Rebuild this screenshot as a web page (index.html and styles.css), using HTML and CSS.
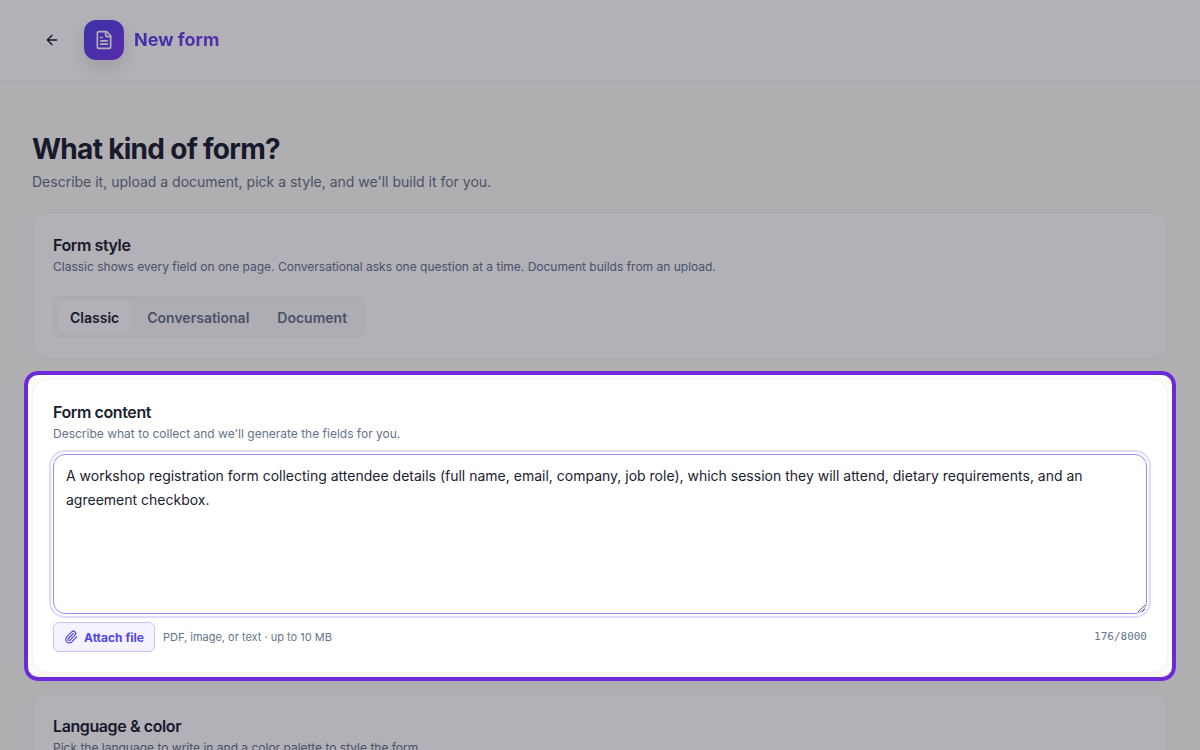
FILE: index.html
```html
<!DOCTYPE html>
<html lang="en">
<head>
  <meta charset="UTF-8">
  <meta name="viewport" content="width=device-width, initial-scale=1">
  <title>New form</title>
  <link rel="stylesheet" href="styles.css">
</head>
<body>
  <header class="topbar">
    <button class="back" type="button" aria-label="Back">
      <svg width="16" height="16" viewBox="0 0 24 24" fill="none" stroke="currentColor" stroke-width="2" stroke-linecap="round" stroke-linejoin="round"><path d="M19 12H5M12 19l-7-7 7-7"/></svg>
    </button>
    <div class="brand">
      <span class="brand-icon">
        <svg width="20" height="20" viewBox="0 0 24 24" fill="none" stroke="currentColor" stroke-width="2" stroke-linecap="round" stroke-linejoin="round"><path d="M15 2H6a2 2 0 0 0-2 2v16a2 2 0 0 0 2 2h12a2 2 0 0 0 2-2V7z"/><path d="M14 2v4a2 2 0 0 0 2 2h4M10 9H8M16 13H8M16 17H8"/></svg>
      </span>
      <span class="brand-title">New form</span>
    </div>
  </header>

  <main class="content">
    <h1>What kind of form?</h1>
    <p class="lead">Describe it, upload a document, pick a style, and we'll build it for you.</p>

    <div class="cards">
      <section class="card">
        <h2>Form style</h2>
        <p class="hint">Classic shows every field on one page. Conversational asks one question at a time. Document builds from an upload.</p>
        <div class="segmented">
          <button class="segment active" type="button">Classic</button>
          <button class="segment" type="button">Conversational</button>
          <button class="segment" type="button">Document</button>
        </div>
      </section>

      <section class="card spotlight">
        <h2><label for="prompt">Form content</label></h2>
        <p class="hint">Describe what to collect and we'll generate the fields for you.</p>
        <textarea id="prompt" class="prompt" maxlength="8000" spellcheck="false">A workshop registration form collecting attendee details (full name, email, company, job role), which session they will attend, dietary requirements, and an agreement checkbox.</textarea>
        <div class="prompt-footer">
          <button class="attach" type="button">
            <svg width="14" height="14" viewBox="0 0 24 24" fill="none" stroke="currentColor" stroke-width="2" stroke-linecap="round" stroke-linejoin="round"><path d="m16 6-8.414 8.586a2 2 0 0 0 2.829 2.829l8.414-8.586a4 4 0 1 0-5.657-5.657l-8.379 8.551a6 6 0 1 0 8.485 8.485l8.379-8.551"/></svg>
            Attach file
          </button>
          <span class="formats">PDF, image, or text · up to 10 MB</span>
          <span class="counter">176/8000</span>
        </div>
      </section>

      <section class="card">
        <h2>Language &amp; color</h2>
        <p class="hint">Pick the language to write in and a color palette to style the form.</p>
      </section>
    </div>
  </main>
</body>
</html>
```
FILE: styles.css
```css
* {
  box-sizing: border-box;
}
body {
  margin: 0;
  height: 100vh;
  overflow: hidden;
  background: #fbfbf6;
  color: #1a2130;
  font-family: Inter, "Liberation Sans", sans-serif;
}
h1, h2, p {
  margin: 0;
}
button {
  font-family: inherit;
  cursor: pointer;
}

/* Top bar */
.topbar {
  display: flex;
  align-items: center;
  gap: 12px;
  padding: 20px 32px;
  background: #fff;
  border-bottom: 1px solid #f5f4fb;
}
.back {
  display: flex;
  align-items: center;
  justify-content: center;
  width: 40px;
  height: 40px;
  padding: 0;
  border: 0;
  background: none;
  color: #1a2130;
}
.brand {
  display: flex;
  align-items: center;
  gap: 10px;
}
.brand-icon {
  display: flex;
  align-items: center;
  justify-content: center;
  width: 40px;
  height: 40px;
  border-radius: 12px;
  background: linear-gradient(135deg, #4f46e5, #7c3aed);
  color: #fff;
  box-shadow: 0 8px 16px rgba(26, 33, 48, 0.12);
}
.brand-title {
  font-size: 18px;
  font-weight: 700;
  line-height: 24px;
  background: linear-gradient(135deg, #4f46e5, #7c3aed);
  -webkit-background-clip: text;
  background-clip: text;
  color: transparent;
}

/* Page */
.content {
  padding: 48px 32px;
}
h1 {
  font-size: 28px;
  font-weight: 700;
  line-height: 40px;
  letter-spacing: -0.025em;
}
.lead {
  margin-top: 3px;
  font-size: 14px;
  line-height: 20px;
  color: #64748b;
}
.cards {
  display: flex;
  flex-direction: column;
  gap: 20px;
  margin-top: 20px;
}
.card {
  padding: 20px;
  background: #fff;
  border: 1px solid #f5f5f7;
  border-radius: 16px;
  box-shadow: 0 1px 2px rgba(26, 33, 48, 0.04);
}
h2 {
  font-size: 16px;
  font-weight: 600;
  line-height: 24px;
  letter-spacing: -0.025em;
}
.hint {
  margin-top: 2px;
  font-size: 12px;
  line-height: 16px;
  color: #64748b;
}

/* Style switch */
.segmented {
  display: inline-flex;
  gap: 4px;
  margin-top: 21px;
  padding: 4px;
  border: 1px solid #f1f1f3;
  border-radius: 8px;
  background: #fafaf9;
  vertical-align: top;
}
.segment {
  height: 32px;
  padding: 0 12px;
  border: 0;
  border-radius: 6px;
  background: none;
  color: #64748b;
  font-size: 14px;
  font-weight: 600;
}
.segment.active {
  background: #fff;
  color: #1a2130;
  box-shadow: 0 1px 2px rgba(26, 33, 48, 0.04);
}

/* Highlighted step, the rest of the page is dimmed */
.spotlight {
  position: relative;
}
.spotlight::after {
  content: "";
  position: absolute;
  inset: -9px;
  z-index: 10;
  border: 4px solid #6d28d9;
  border-radius: 14px;
  box-shadow: 0 0 0 2000px rgba(15, 12, 31, 0.32);
  pointer-events: none;
}
.prompt {
  display: block;
  width: 100%;
  height: 160px;
  margin-top: 12px;
  padding: 9px 12px;
  border: 1px solid #9b8cf0;
  border-radius: 12px;
  outline: 0;
  box-shadow: 0 0 0 2px #fff, 0 0 0 4px #dedbfb;
  color: #1a2130;
  font-family: inherit;
  font-size: 14px;
  line-height: 24px;
  resize: vertical;
}
.prompt-footer {
  display: flex;
  align-items: center;
  gap: 8px;
  margin-top: 8px;
}
.attach {
  display: flex;
  align-items: center;
  gap: 6px;
  height: 30px;
  padding: 0 10px;
  border: 1px solid #c9c2f8;
  border-radius: 6px;
  background: #f5f3ff;
  color: #4f46e5;
  font-size: 12px;
  font-weight: 700;
}
.formats {
  font-size: 11px;
  line-height: 16px;
  color: #64748b;
}
.counter {
  margin-left: auto;
  font-family: "DejaVu Sans Mono", monospace;
  font-size: 11px;
  line-height: 16px;
  color: #64748b;
}
```
